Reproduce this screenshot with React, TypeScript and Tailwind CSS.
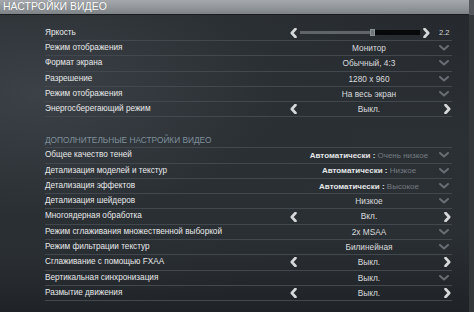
type Row = {
  label: string
  type: 'slider' | 'select' | 'toggle'
  value?: string
  auto?: string
}

const basic: Row[] = [
  { label: 'Яркость', type: 'slider' },
  { label: 'Режим отображения', type: 'select', value: 'Монитор' },
  { label: 'Формат экрана', type: 'select', value: 'Обычный, 4:3' },
  { label: 'Разрешение', type: 'select', value: '1280 x 960' },
  { label: 'Режим отображения', type: 'select', value: 'На весь экран' },
  { label: 'Энергосберегающий режим', type: 'toggle', value: 'Выкл.' },
]

const advanced: Row[] = [
  { label: 'Общее качество теней', type: 'select', auto: 'Очень низкое' },
  { label: 'Детализация моделей и текстур', type: 'select', auto: 'Низкое' },
  { label: 'Детализация эффектов', type: 'select', auto: 'Высокое' },
  { label: 'Детализация шейдеров', type: 'select', value: 'Низкое' },
  { label: 'Многоядерная обработка', type: 'toggle', value: 'Вкл.' },
  { label: 'Режим сглаживания множественной выборкой', type: 'select', value: '2x MSAA' },
  { label: 'Режим фильтрации текстур', type: 'select', value: 'Билинейная' },
  { label: 'Сглаживание с помощью FXAA', type: 'toggle', value: 'Выкл.' },
  { label: 'Вертикальная синхронизация', type: 'select', value: 'Выкл.' },
  { label: 'Размытие движения', type: 'toggle', value: 'Выкл.' },
]

function ArrowLeft() {
  return (
    <svg width="7" height="10" viewBox="0 0 7 10" className="block">
      <polyline points="5.5,1 1.8,5 5.5,9" fill="none" stroke="#d6d8da" strokeWidth="2.6" strokeLinejoin="round" strokeLinecap="round" />
    </svg>
  )
}

function ArrowRight() {
  return (
    <svg width="7" height="10" viewBox="0 0 7 10" className="block">
      <polyline points="1.5,1 5.2,5 1.5,9" fill="none" stroke="#d6d8da" strokeWidth="2.6" strokeLinejoin="round" strokeLinecap="round" />
    </svg>
  )
}

function ChevronDown() {
  return (
    <svg width="10" height="6" viewBox="0 0 10 6" className="block">
      <polyline points="1,1 5,4.6 9,1" fill="none" stroke="#686e74" strokeWidth="2" strokeLinejoin="round" strokeLinecap="round" />
    </svg>
  )
}

function Value({ row }: { row: Row }) {
  if (row.type === 'slider') {
    return (
      <div className="flex items-center w-[166px]">
        <div className="ml-[4px]"><ArrowLeft /></div>
        <div className="ml-[3px] w-[120px] h-[4px] flex items-center">
          <div className="w-[70px] h-[3px] bg-[#5f6569]" />
          <div className="w-[5px] h-[7px] bg-[#6f767b] border border-[#899095]" />
          <div className="flex-1 h-[5px] bg-[#070809]" />
        </div>
        <div className="ml-[3px]"><ArrowRight /></div>
        <span className="ml-[9px] text-[7.5px] text-[#d8d8d8]">2.2</span>
      </div>
    )
  }
  return (
    <div className="grid grid-cols-[16px_1fr_16px] items-center w-[166px]">
      <div className="flex justify-start pl-[4px]">{row.type === 'toggle' && <ArrowLeft />}</div>
      <div className="text-center text-[8.3px] text-[#dadcde] whitespace-nowrap">
        {row.auto ? (
          <span className="text-[8px]">
            <span className="font-bold text-[#e4e6e8]">Автоматически :</span>{' '}
            <span className="text-[#767c82]">{row.auto}</span>
          </span>
        ) : (
          row.value
        )}
      </div>
      <div className="flex justify-end pr-[1px]">
        {row.type === 'toggle' ? <ArrowRight /> : <div className="pr-[2px]"><ChevronDown /></div>}
      </div>
    </div>
  )
}

function SettingRow({ row }: { row: Row }) {
  return (
    <div className="flex items-center h-[15.3px] border-b border-[#42484e]">
      <span className="flex-1 text-[8.2px] text-[#e8e9ea] whitespace-nowrap">{row.label}</span>
      <Value row={row} />
    </div>
  )
}

export default function App() {
  return (
    <div
      className="w-[474px] h-[312px] overflow-hidden flex"
      style={{ fontFamily: '"Liberation Sans", Arial, sans-serif' }}
    >
      <div className="w-[469px] flex flex-col bg-[radial-gradient(ellipse_at_8%_30%,#3b4146_0%,#2a2f34_40%,transparent_70%),linear-gradient(180deg,#25292d_0%,#2b3035_45%,#2a2f34_75%,#1f2327_100%)]">
        {/* Header */}
        <div className="h-[15px] shrink-0 bg-[linear-gradient(180deg,#a5a9ad_0%,#8f9498_60%,#7d8287_100%)] flex items-center pl-[3px] border-b border-[#1a1c1e]">
          <span className="text-[10.5px] text-white [text-shadow:0_0_1px_rgba(0,0,0,0.3)]">
            НАСТРОЙКИ ВИДЕО
          </span>
        </div>

        {/* Basic */}
        <div className="ml-[45px] w-[407px] mt-[10.7px]">
          {basic.map((r, i) => (
            <SettingRow key={i} row={r} />
          ))}
        </div>

        {/* Advanced */}
        <div className="ml-[45px] w-[407px] mt-[15.5px]">
          <div className="flex items-center h-[15.3px] border-b border-[#42484e]">
            <span className="text-[8.3px] text-[#7f909c]">ДОПОЛНИТЕЛЬНЫЕ НАСТРОЙКИ ВИДЕО</span>
          </div>
          {advanced.map((r, i) => (
            <SettingRow key={i} row={r} />
          ))}
        </div>
      </div>
      <div className="w-[5px] flex flex-col">
        <div className="h-[15px] bg-[#54585c]" />
        <div className="flex-1 bg-[#33373a]" />
      </div>
    </div>
  )
}
